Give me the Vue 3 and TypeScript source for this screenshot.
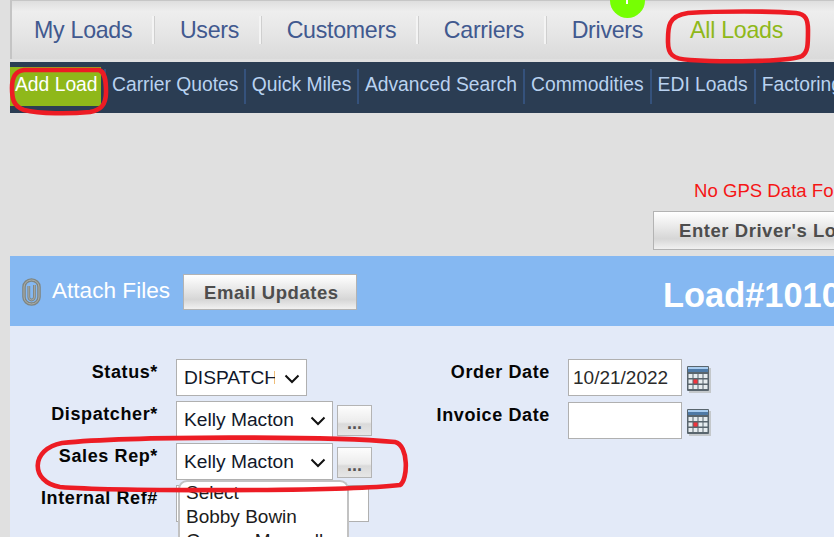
<script setup lang="ts">
const tabs = ['My Loads', 'Users', 'Customers', 'Carriers', 'Drivers']
const subs = ['Carrier Quotes', 'Quick Miles', 'Advanced Search', 'Commodities', 'EDI Loads', 'Factoring']
const cols = [0, 1, 2, 3]
const rows = [0, 1, 2]
</script>

<template>
  <div class="page">
    <nav class="tabs">
      <span class="dot"><i></i></span>
      <a v-for="t in tabs" :key="t" class="tab">{{ t }}</a>
      <a class="tab active">All Loads</a>
    </nav>
    <nav class="subnav">
      <a class="add">Add Load</a>
      <a v-for="s in subs" :key="s" class="sub">{{ s }}</a>
    </nav>

    <div class="notice">
      <p class="gps">No GPS Data Found For This Load</p>
      <button class="btn driver">Enter Driver's Location</button>
    </div>

    <header class="head">
      <div class="attach">
        <svg class="clip" width="21" height="28" viewBox="0 0 21 28">
          <path d="M3 19 V9 a7.5 7 0 0 1 15 0 V19 a7.5 7 0 0 1 -15 0 Z" fill="none" stroke="#7f8581" stroke-width="3.6" />
          <path d="M3 19 V9 a7.5 7 0 0 1 15 0 V19 a7.5 7 0 0 1 -15 0 Z" fill="none" stroke="#b0b4b1" stroke-width="0.9" />
          <path d="M7.8 8 V19 a2.8 3 0 0 0 5.6 0 V7" fill="none" stroke="#7f8581" stroke-width="2.8" />
          <path d="M7.8 8 V19 a2.8 3 0 0 0 5.6 0 V7" fill="none" stroke="#b0b4b1" stroke-width="0.8" />
        </svg>
        <span class="attach-text">Attach Files</span>
        <button class="btn email">Email Updates</button>
      </div>
      <h1 class="title">Load#101010</h1>
    </header>

    <section class="form">
      <div class="col-left">
        <div class="row r1">
          <label>Status*</label>
          <div class="select status"><span>DISPATCHED</span>
            <svg class="chev" width="16" height="10" viewBox="0 0 16 10"><path d="M1.5 1.5 8 8l6.5-6.5" fill="none" stroke="#111" stroke-width="2" /></svg>
          </div>
        </div>
        <div class="row r2">
          <label>Dispatcher*</label>
          <div class="select user"><span>Kelly Macton</span>
            <svg class="chev" width="16" height="10" viewBox="0 0 16 10"><path d="M1.5 1.5 8 8l6.5-6.5" fill="none" stroke="#111" stroke-width="2" /></svg>
          </div>
          <button class="more">...</button>
        </div>
        <div class="row r3">
          <label>Sales Rep*</label>
          <div class="select user"><span>Kelly Macton</span>
            <svg class="chev" width="16" height="10" viewBox="0 0 16 10"><path d="M1.5 1.5 8 8l6.5-6.5" fill="none" stroke="#111" stroke-width="2" /></svg>
          </div>
          <button class="more">...</button>
        </div>
        <div class="row r4">
          <label>Internal Ref#</label>
          <div class="input ref"></div>
          <div class="menu">
            <div class="menu-scroll">
              <div>Select</div>
              <div>Bobby Bowin</div>
              <div>George Maxwell</div>
            </div>
          </div>
        </div>
      </div>
      <div class="col-right">
        <div class="row d1">
          <label>Order Date</label>
          <div class="input date">10/21/2022</div>
          <svg class="cal" width="24" height="28" viewBox="0 0 24 28">
            <rect x="2" y="3" width="22" height="25" fill="#c4c8cb" />
            <rect x="0" y="1" width="22" height="25" rx="1" fill="#59656d" />
            <rect x="1" y="2" width="20" height="2" fill="#a9cdf0" />
            <rect x="1" y="4" width="20" height="3" fill="#4f7aa6" />
            <template v-for="r in rows" :key="r">
              <rect v-for="c in cols" :key="c" :x="1.5 + c * 5" :y="9 + r * 5.5" width="4" height="4" :fill="r === 1 && c === 1 ? '#f2343c' : '#e6ecef'" />
            </template>
          </svg>
        </div>
        <div class="row d2">
          <label>Invoice Date</label>
          <div class="input date"></div>
          <svg class="cal" width="24" height="28" viewBox="0 0 24 28">
            <rect x="2" y="3" width="22" height="25" fill="#c4c8cb" />
            <rect x="0" y="1" width="22" height="25" rx="1" fill="#59656d" />
            <rect x="1" y="2" width="20" height="2" fill="#a9cdf0" />
            <rect x="1" y="4" width="20" height="3" fill="#4f7aa6" />
            <template v-for="r in rows" :key="r">
              <rect v-for="c in cols" :key="c" :x="1.5 + c * 5" :y="9 + r * 5.5" width="4" height="4" :fill="r === 1 && c === 1 ? '#f2343c' : '#e6ecef'" />
            </template>
          </svg>
        </div>
      </div>
    </section>

    <svg class="marks" width="834" height="537" viewBox="0 0 834 537">
      <g fill="none" stroke="#ed1c24" stroke-width="4.6">
        <path d="M688 13 C720 11 770 11 796 13 C806 14 808 20 808 30 C808 45 808 52 802 56 C790 62 720 62 690 60 C672 59 668 54 668 42 C668 28 667 16 688 13 Z" />
        <path d="M24 70 C50 70 85 70 99 70 C105 72 106 80 106 92 C106 106 100 110 90 112 C70 114 40 114 24 110 C13 106 12 98 12 88 C12 76 16 71 24 70 Z" />
        <path d="M62 443 C130 436 330 436 395 442 C409 445 408 480 400 485 C340 492 110 491 60 487 C30 482 30 449 62 443 Z" />
      </g>
    </svg>
  </div>
</template>

<style>
html, body { margin: 0; background: #e0e0e0; }
</style>

<style scoped>
.page {
  position: relative;
  width: 834px;
  height: 537px;
  overflow: hidden;
  box-sizing: border-box;
  padding-left: 10px;
  background: #e0e0e0;
  font-family: "Liberation Sans", Arial, sans-serif;
}
.tabs {
  position: relative;
  display: flex;
  align-items: center;
  width: 824px;
  height: 59px;
  box-sizing: border-box;
  border-top: 1px solid #c6c6c6;
  border-left: 2px solid #c4c4c4;
  background: linear-gradient(#dedede, #eeeeee 18%, #e6e6e6 55%, #dadada);
}
.dot {
  position: absolute;
  left: 598px;
  top: -18px;
  width: 35px;
  height: 35px;
  border-radius: 50%;
  background: #76ff03;
}
.dot i {
  position: absolute;
  left: 16px;
  top: 16px;
  width: 2px;
  height: 5px;
  background: #fff;
}
.tab {
  flex: none;
  padding: 0 19.6px 0 26px;
  height: 28px;
  line-height: 28px;
  margin-top: 0;
  font-size: 23.2px;
  letter-spacing: -0.28px;
  color: #41598f;
  border-right: 2px solid #f4f4f4;
  box-shadow: 1px 0 0 #cfcfcf;
}
.tab:first-of-type { padding-left: 22px; }
.tab:nth-of-type(5) { border-right: 0; box-shadow: none; padding-right: 47px; }
.tab.active { color: #8fb81a; border-right: 0; box-shadow: none; padding: 0; }
.subnav {
  display: flex;
  align-items: flex-start;
  height: 51px;
  margin-top: 3px;
  width: 824px;
  overflow: hidden;
  background: #2b3d53;
  white-space: nowrap;
}
.add {
  flex: none;
  box-sizing: border-box;
  width: 91px;
  height: 39px;
  margin-top: 5px;
  padding-left: 5px;
  line-height: 35px;
  font-size: 19.3px;
  color: #fff;
  background: #8fb81a;
}
.sub {
  flex: none;
  height: 35px;
  margin-top: 7px;
  line-height: 31px;
  padding: 0 6px 0 7px;
  font-size: 19.3px;
  color: #b9d2f0;
  border-right: 2px solid #35527c;
}
.sub:nth-of-type(2) {
  margin-left: 3px;
  border-left: 2px solid #35527c;
  padding-left: 6px;
  padding-right: 5.4px;
}
.sub:nth-of-type(3) { padding-left: 6px; padding-right: 5.4px; }
.sub:nth-of-type(n+4) { padding-left: 6px; }
.notice {
  height: 143px;
  box-sizing: border-box;
  padding: 64px 0 0 643px;
  white-space: nowrap;
}
.gps {
  margin: 0;
  padding-left: 41px;
  height: 27px;
  line-height: 27px;
  font-size: 18.6px;
  color: #f51616;
}
.btn {
  box-sizing: border-box;
  border: 1px solid #b3b3b3;
  background: linear-gradient(#fff, #ececec 35%, #d6d6d6 72%, #f1f1f1);
  color: #4d4d4d;
  font: bold 18.5px "Liberation Sans", Arial, sans-serif;
  letter-spacing: 0.55px;
  text-align: left;
  white-space: nowrap;
}
.driver {
  display: block;
  margin-top: 7px;
  width: 300px;
  height: 39px;
  padding: 0 0 0 25px;
}
.head {
  display: flex;
  align-items: center;
  height: 70px;
  background: #85b8f2;
  white-space: nowrap;
}
.attach {
  display: flex;
  align-items: center;
  width: 653px;
  flex: none;
}
.clip { margin-left: 11px; margin-top: 2px; flex: none; }
.attach-text {
  margin-left: 10px;
  font-size: 22.6px;
  color: #fff;
  margin-top: 0;
}
.email {
  margin-left: 13px;
  margin-top: 2px;
  width: 174px;
  height: 36px;
  padding: 2px 0 0 20px;
}
.title {
  margin: 8px 0 0;
  font-size: 34.4px;
  font-weight: bold;
  color: #fff;
}
.form {
  display: flex;
  height: 240px;
  background: #e3eaf8;
  box-sizing: border-box;
  padding-top: 33px;
}
.col-left { width: 392px; flex: none; position: relative; }
.col-right { flex: none; }
.row {
  position: relative;
  display: flex;
  align-items: flex-start;
}
.row label {
  flex: none;
  box-sizing: border-box;
  text-align: right;
  font-size: 18px;
  font-weight: bold;
  letter-spacing: 0.62px;
  color: #050505;
  white-space: nowrap;
  width: 148px;
  margin-right: 18px;
  line-height: 24px;
  margin-top: 1px;
}
.r1 { height: 42px; }
.r2 { height: 42px; }
.r3 { height: 42px; }
.r4 { height: 40px; }
.d1 { height: 43px; }
.d2 { height: 40px; }
.select {
  display: flex;
  align-items: center;
  box-sizing: border-box;
  height: 37px;
  padding-left: 7px;
  background: #fff;
  border: 1px solid #b0b0b0;
  font-size: 19.2px;
  color: #12182a;
  position: relative;
}
.select span { overflow: hidden; white-space: nowrap; }
.status { width: 131px; }
.status span { width: 91px; }
.user { width: 157px; }
.chev { position: absolute; right: 6px; top: 14px; }
.more {
  box-sizing: border-box;
  margin: 4px 0 0 4px;
  width: 35px;
  height: 31px;
  padding: 6px 0 0;
  border: 1px solid #b4b4b4;
  background: linear-gradient(#fdfdfd, #ececec 55%, #dadada 62%, #e6e6e6);
  color: #555;
  font: bold 18px "Liberation Sans", Arial, sans-serif;
}
.input {
  box-sizing: border-box;
  height: 37px;
  padding-left: 4px;
  line-height: 36px;
  background: #fff;
  border: 1px solid #b0b0b0;
  font-size: 19px;
  color: #2a2a2a;
}
.ref { width: 193px; }
.date { width: 114px; }
.cal { margin: 6px 0 0 5px; flex: none; }
.menu {
  position: absolute;
  left: 168px;
  top: -5px;
  width: 171px;
  height: 72px;
  box-sizing: border-box;
  border: 2px solid #c2c2c2;
  border-bottom: 0;
  border-radius: 9px 9px 0 0;
  background: #fff;
  overflow: hidden;
}
.menu-scroll {
  margin-top: -1px;
  padding-left: 6px;
  font-size: 19px;
  line-height: 24px;
  color: #1c1c1c;
}
.marks { position: absolute; left: 0; top: 0; pointer-events: none; }
</style>
